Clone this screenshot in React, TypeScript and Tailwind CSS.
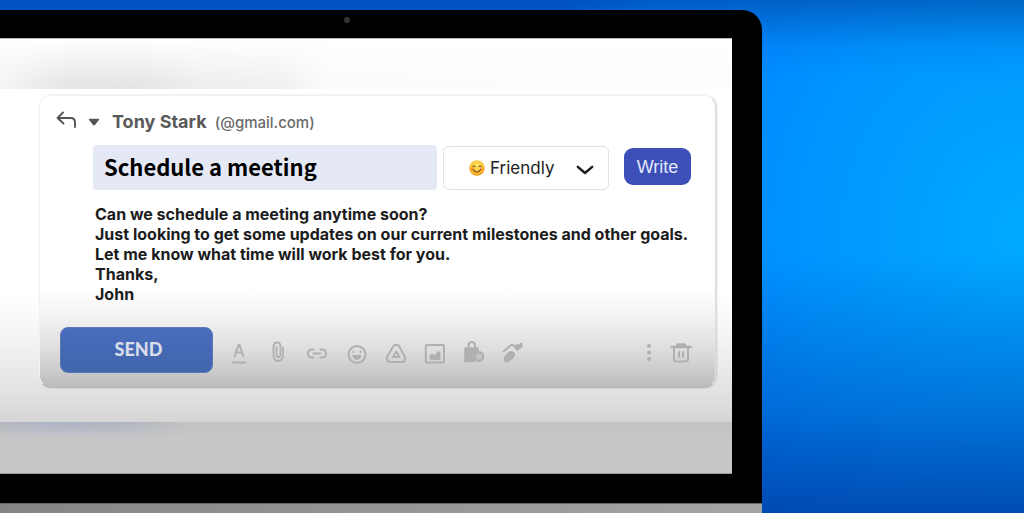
import { useState, type ReactNode } from "react";

function ToolButton({ label, children }: { label: string; children: ReactNode }) {
  return (
    <button type="button" aria-label={label} className="flex size-5 items-center justify-center text-[#b0b0b0]">
      <svg viewBox="0 0 22 24" className="h-6 w-[22px] shrink-0" fill="none" stroke="currentColor" strokeWidth="2" strokeLinecap="round" strokeLinejoin="round" aria-hidden="true">
        {children}
      </svg>
    </button>
  );
}

function SmileEmoji() {
  return (
    <svg viewBox="0 0 16 16" className="size-4" aria-hidden="true">
      <defs>
        <radialGradient id="face" cx="0.5" cy="0.35" r="0.65">
          <stop offset="0" stopColor="#ffe566" />
          <stop offset="0.65" stopColor="#fbc53a" />
          <stop offset="1" stopColor="#ee9422" />
        </radialGradient>
      </defs>
      <circle cx="8" cy="8" r="7.8" fill="url(#face)" />
      <ellipse cx="3.2" cy="9" rx="2" ry="1.4" fill="#f4783a" opacity="0.5" />
      <ellipse cx="12.8" cy="9" rx="2" ry="1.4" fill="#f4783a" opacity="0.5" />
      <path d="M3.6 6.6Q5 4.6 6.4 6.6M9.6 6.6Q11 4.6 12.4 6.6" fill="none" stroke="#6b3d12" strokeWidth="1" strokeLinecap="round" />
      <path d="M4.3 9.6Q8 14.4 11.7 9.6" fill="none" stroke="#7a4413" strokeWidth="1.1" strokeLinecap="round" />
    </svg>
  );
}

function Composer() {
  const [subject, setSubject] = useState("Schedule a meeting");
  const [body, setBody] = useState(
    "Can we schedule a meeting anytime soon?\nJust looking to get some updates on our current milestones and other goals.\nLet me know what time will work best for you.\nThanks,\nJohn",
  );
  return (
    <form
      onSubmit={(e) => e.preventDefault()}
      className="rounded-xl border border-t-[#f0f0f0] border-r-[#dcdcdc] border-b-[#b4b4b4] border-l-[#f2f2f2] bg-[linear-gradient(to_bottom,#ffffff_66%,#f4f4f4_75%,#dedede_87%,#bcbcbc_100%)] pt-3 pr-5 pb-[14px] pl-4 shadow-[1px_0_2px_rgba(0,0,0,0.15)]"
    >
      <div className="flex h-7 items-center text-[#555555]">
        <button type="button" aria-label="Reply" className="w-6">
          <svg viewBox="0 0 24 24" className="size-6" fill="none" stroke="currentColor" strokeWidth="1.900" strokeLinecap="round" strokeLinejoin="round" aria-hidden="true">
            <path d="M7 2.500L1.500 8L7.500 13.500M2 8H14.500Q19 8 19 12.500V17" />
          </svg>
        </button>
        <button type="button" aria-label="Reply options" className="ml-2 w-4">
          <svg viewBox="0 0 12 8" className="h-2 w-3" fill="currentColor" aria-hidden="true">
            <path d="M1.500 .8H10.500Q11.500 .8 11 1.800L7.200 6.800Q6 8 4.800 6.800L1 1.800Q.5 .8 1.500 .8Z" />
          </svg>
        </button>
        <p className="ml-2 flex items-baseline gap-2 font-['Inter',sans-serif]">
          <span className="text-lg font-bold text-[#5a5a5a]">Tony Stark</span>
          <span className="text-[15px] font-medium text-[#6a6a6a]">(@gmail.com)</span>
        </p>
      </div>

      <div className="mt-[9px] flex items-center pl-[37px]">
        <input
          aria-label="Subject"
          value={subject}
          onChange={(e) => setSubject(e.target.value)}
          className="h-[45px] min-w-0 flex-1 rounded-sm bg-[#e5e9f5] px-[11px] pb-1 font-['Noto_Sans_CJK_SC',sans-serif] text-[22px] font-bold text-black outline-none"
        />
        <div className="relative ml-[6px] w-[166px]">
          <select
            aria-label="Tone"
            className="h-[44px] w-full appearance-none rounded-md border border-[#e2e2e4] bg-white pt-[2px] pl-[46px] font-['Inter',sans-serif] text-[17px] text-[#222222] outline-none"
          >
            <option>Friendly</option>
            <option>Formal</option>
          </select>
          <span className="pointer-events-none absolute inset-y-0 left-[26px] flex items-center">
            <SmileEmoji />
          </span>
          <span className="pointer-events-none absolute inset-y-0 right-[15px] flex items-center">
            <svg viewBox="0 0 18 10" className="mt-1 h-[10px] w-[18px]" fill="none" stroke="#1b1b1b" strokeWidth="2.400" strokeLinecap="round" strokeLinejoin="round" aria-hidden="true">
              <path d="M1.800 1.800L9 8L16.200 1.800" />
            </svg>
          </span>
        </div>
        <button type="button" className="mr-[4px] mb-[2px] ml-[15px] h-[37px] w-[67px] rounded-[9px] bg-[#3c4fb8] font-['Liberation_Sans',sans-serif] text-lg font-medium text-[#e3e8fa]">
          Write
        </button>
      </div>

      <textarea
        aria-label="Message"
        rows={5}
        value={body}
        onChange={(e) => setBody(e.target.value)}
        className="mt-[14px] block w-full resize-none overflow-hidden bg-transparent pl-[39px] font-['Inter',sans-serif] text-base leading-5 font-bold text-[#1c1c1c] outline-none"
      />

      <div className="mt-[23px] flex items-center pl-[4px]">
        <button type="submit" className="h-[46px] w-[153px] rounded-lg border border-[#5b78b5] bg-gradient-to-b from-[#4a6dbe] to-[#4066ab] pb-[3px] pl-1 font-['Lato',sans-serif] text-lg font-black text-[#d8dde9]">
          SEND
        </button>
        <div className="ml-4 flex flex-1 items-center gap-[19px] pt-[6px]">
          <ToolButton label="Text formatting">
            <path d="M6.500 15.500L10.500 4H11.500L15.500 15.500M8 11.500H14M4.500 21.500H17.500" />
          </ToolButton>
          <ToolButton label="Attach file">
            <path d="M16 6.500V13.500Q16 20 11.200 20Q6.500 20 6.500 13.500V6Q6.500 1.500 10 1.500Q13.500 1.500 13.500 6V13.500Q13.500 16 11.500 16Q9.500 16 9.500 13.500V6" strokeWidth="1.800" />
          </ToolButton>
          <ToolButton label="Insert link">
            <path d="M7.500 8.500H6Q2 8.500 2 12.500Q2 16.500 6 16.500H7.500M14.500 8.500H16Q20 8.500 20 12.500Q20 16.500 16 16.500H14.500M7.500 12.500H14.500" />
          </ToolButton>
          <ToolButton label="Insert emoji">
            <circle cx="12" cy="13.500" r="8.500" />
            <path d="M8.500 10.500V11M15.500 10.500V11" />
            <path d="M8 14.500H16Q15 18.500 12 18.500Q9 18.500 8 14.500Z" fill="currentColor" strokeWidth="1" />
          </ToolButton>
          <ToolButton label="Insert from drive">
            <g transform="translate(1 0)">
              <path d="M8.500 5Q9 4 10 4H12.500Q13.500 4 14 5L20 16Q20.500 17 20 18L19.500 20Q19 21 18 21H4.500Q3.500 21 3 20L1.800 18Q1.500 17 2 16Z" />
              <path d="M11.200 10.500L14.500 16H8Z" />
            </g>
          </ToolButton>
          <ToolButton label="Insert photo">
            <g transform="translate(1 .5)">
              <rect x="1.800" y="3.500" width="18.200" height="17.500" rx="1" />
              <path d="M6 17.500V14L8.500 12.500L10.500 14.500L14 10L16 11V17.500Z" fill="currentColor" strokeWidth="1" />
            </g>
          </ToolButton>
          <ToolButton label="Confidential mode">
            <path d="M6.500 7V4.500Q6.500 1 9.800 1Q13 1 13 4.500V7" />
            <path d="M3 7H16V10.500Q10.500 12 11 16Q11 18.500 12.500 20.500H3Z" fill="currentColor" strokeWidth="1.500" />
            <circle cx="17" cy="15.500" r="4.300" strokeWidth="2.200" fill="currentColor" fillOpacity="0.500" />
          </ToolButton>
          <ToolButton label="Insert signature">
            <path d="M2.500 10.500L9.500 4.500Q11.500 3 13 5L15.500 7" />
            <path d="M13.500 6L16 3L17.500 4L20.500 1.800L21.500 5.500L16.500 9.500Z" fill="currentColor" strokeWidth="1" />
            <path d="M8.500 11.200Q11 9.800 13 12Q14 14 12.500 16L9 19.500Q6 21.500 4 20.500Q2.800 18 4.500 15Z" fill="currentColor" strokeWidth="1.200" />
          </ToolButton>
        </div>
        <div className="flex items-center gap-3 pt-[6px] pr-1">
          <ToolButton label="More options">
            <g fill="currentColor" stroke="none">
              <circle cx="11" cy="5" r="2" />
              <circle cx="11" cy="11.500" r="2" />
              <circle cx="11" cy="18" r="2" />
            </g>
          </ToolButton>
          <ToolButton label="Discard draft">
            <path d="M1.500 6H20.500M6.500 5.500L7.500 3.500H14.500L15.500 5.500" strokeWidth="2.400" />
            <path d="M4 7V18Q4 20.500 6.500 20.500H15.500Q18 20.500 18 18V7M9 11V16M13 11V16" />
          </ToolButton>
        </div>
      </div>
    </form>
  );
}

export default function App() {
  return (
    <div className="flex min-h-screen flex-col bg-[linear-gradient(to_bottom,rgba(0,70,160,0.6)_0%,rgba(0,80,190,0.12)_9%,rgba(0,70,170,0)_15%,rgba(0,70,170,0)_50%,rgba(0,60,160,0.4)_80%,rgba(0,60,160,0.8)_100%),radial-gradient(ellipse_50%_110%_at_100%_45%,#00a9ff_0%,#0094ff_45%,#007aff_85%,#0060e8_100%)] pt-[10px]">
      <main className="mr-[262px] flex flex-1 flex-col">
        <div className="flex flex-1 flex-col rounded-tr-[20px] bg-black pr-[30px] pb-[29px]">
          <div className="flex h-7 items-center pl-[344px]">
            <span className="-mt-2 size-[6px] rounded-full bg-[#333333]" />
          </div>
          <div className="flex flex-1 flex-col bg-[#c6c6c6]">
            <div className="h-[51px] border-t border-[#bbbbbb] bg-[linear-gradient(to_bottom,#ffffff_0%,rgba(255,255,255,0.2)_90%),linear-gradient(to_right,#f3f3f3_0%,#e0e0e0_9%,#dfdfdf_19%,#eaeaea_27%,#ececec_38%,#fbfbfb_45%,#fcfcfc_100%)]" />
            <div className="bg-[linear-gradient(to_bottom,#ffffff_62%,#f4f4f4_75%,#e3e3e3_90%,#d5d5d5_100%)] pt-[6px] pr-4 pb-[34px] pl-[39px]">
              <Composer />
            </div>
            <div className="min-h-[50px] flex-1 border-b border-[#999999] bg-[linear-gradient(to_bottom,rgba(198,198,198,0)_0%,#c7c7c7_35%),linear-gradient(to_right,#b4b7be_0%,#adb4c6_6%,#aeb4c0_17%,#c3c3c3_26%,#c3c3c3_100%)]" />
          </div>
        </div>
        <div className="h-[10px] border-t border-[#666666] bg-gradient-to-r from-[#858585] to-[#a3a5a7]" />
      </main>
    </div>
  );
}
